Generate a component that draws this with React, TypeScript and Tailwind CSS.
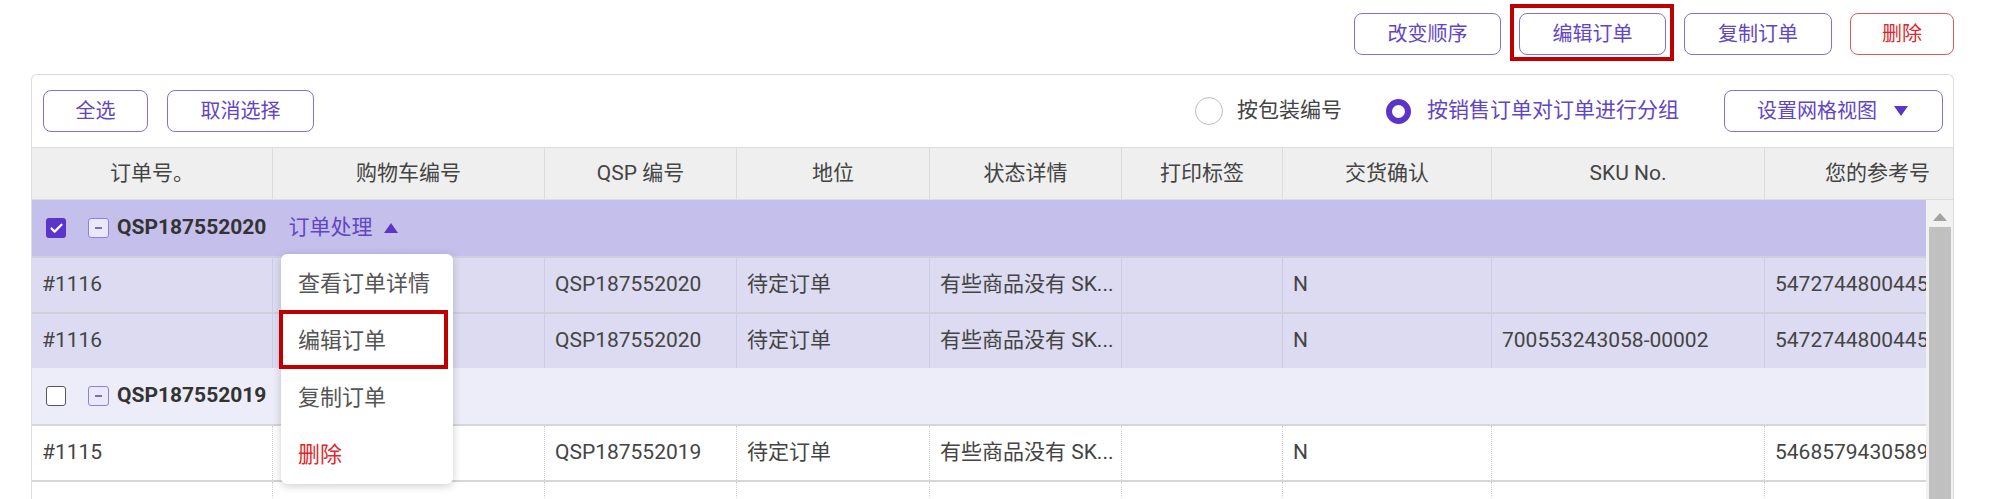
import React from 'react';
import { Check } from 'lucide-react';

const columns = [
  { label: '订单号。', w: 'w-[241px]' },
  { label: '购物车编号', w: 'w-[272px]' },
  { label: 'QSP 编号', w: 'w-[192px]' },
  { label: '地位', w: 'w-[193px]' },
  { label: '状态详情', w: 'w-[192px]' },
  { label: '打印标签', w: 'w-[161px]' },
  { label: '交货确认', w: 'w-[209px]' },
  { label: 'SKU No.', w: 'w-[273px]' },
  { label: '您的参考号', w: 'w-[226px]' },
];

const status = '有些商品没有 SK...';

const groups = [
  {
    id: 'QSP187552020',
    checked: true,
    rowBg: 'bg-[#c5bfec]',
    itemBg: 'bg-[#dcdbf2]',
    items: [
      ['#1116', '', 'QSP187552020', '待定订单', status, '', 'N', '', '5472744800445'],
      ['#1116', '', 'QSP187552020', '待定订单', status, '', 'N', '700553243058-00002', '5472744800445'],
    ],
  },
  {
    id: 'QSP187552019',
    checked: false,
    rowBg: 'bg-[#ecedf8]',
    itemBg: 'bg-white',
    items: [
      ['#1115', '', 'QSP187552019', '待定订单', status, '', 'N', '', '5468579430589'],
      ['', '', '', '', '', '', '', '', ''],
    ],
  },
];

const OutlineButton = ({ label, w, danger }: { label: string; w: string; danger?: boolean }) => (
  <button
    className={`${w} h-[42px] rounded-[8px] border-[1.5px] bg-white text-[20px] ${
      danger ? 'border-[#e05a5a] text-[#e0262c]' : 'border-[#8a6ed8] text-[#6245c6]'
    }`}
  >
    {label}
  </button>
);

const MinusBox = () => (
  <span className="flex h-[20px] w-[21px] items-center justify-center rounded-[3px] border-[1.5px] border-[#8f7fe0] bg-[#ebe8fb]">
    <span className="h-[2px] w-[7px] bg-[#7b6bd0]" />
  </span>
);

export default function App() {
  return (
    <div className="relative h-[499px] w-[2000px] overflow-hidden bg-white font-[Roboto,'Noto_Sans_CJK_SC',sans-serif] text-[21px] text-[#444]">
      {/* top actions */}
      <div className="flex justify-end gap-[18px] pr-[46px] pt-[13px]">
        <OutlineButton label="改变顺序" w="w-[147px]" />
        <div className="relative">
          <OutlineButton label="编辑订单" w="w-[147px]" />
          <span className="absolute -bottom-[6px] -left-[9px] -right-[8px] -top-[9px] border-4 border-[#c00000]" />
        </div>
        <OutlineButton label="复制订单" w="w-[148px]" />
        <OutlineButton label="删除" w="w-[104px]" danger />
      </div>

      {/* grid panel */}
      <div className="ml-[31px] mr-[46px] mt-[19px] rounded-t-[6px] border border-b-0 border-[#dcdcdc]">
        <div className="flex h-[72px] items-center pl-[11px] pr-[10px]">
          <div className="flex gap-[19px]">
            <OutlineButton label="全选" w="w-[105px]" />
            <OutlineButton label="取消选择" w="w-[147px]" />
          </div>
          <div className="ml-auto flex items-center">
            <span className="h-[28px] w-[28px] rounded-full border-[1.5px] border-[#bdbdbd] bg-white" />
            <span className="ml-[14px] text-[#444]">按包装编号</span>
            <span className="ml-[44px] h-[25px] w-[25px] rounded-full border-[6px] border-[#5b34c9] bg-white" />
            <span className="ml-[16px] text-[#6245c6]">按销售订单对订单进行分组</span>
            <button className="ml-[45px] flex h-[42px] w-[219px] items-center rounded-[8px] border-[1.5px] border-[#8a6ed8] bg-white pl-[32px] text-[20px] text-[#6245c6]">
              设置网格视图
              <svg className="ml-[17px]" width="14" height="10" viewBox="0 0 14 10">
                <path d="M0 0 L14 0 L7 10 Z" fill="#5b34c9" />
              </svg>
            </button>
          </div>
        </div>

        {/* header */}
        <div className="flex h-[53px] overflow-hidden border-y border-[#dcdcdc] bg-[#efefef]">
          {columns.map((c) => (
            <div
              key={c.label}
              className={`${c.w} flex shrink-0 items-center justify-center border-r border-[#dcdcdc] text-[#444]`}
            >
              {c.label}
            </div>
          ))}
        </div>

        {/* body */}
        <div className="flex">
          <div className="min-w-0 flex-1 overflow-hidden">
            {groups.map((g) => (
              <div key={g.id}>
                <div className={`flex h-[56px] items-center ${g.rowBg} pl-[14px]`}>
                  {g.checked ? (
                    <span className="flex h-[20px] w-[20px] items-center justify-center rounded-[3px] bg-[#5b34c9]">
                      <Check size={15} strokeWidth={3.5} color="white" />
                    </span>
                  ) : (
                    <span className="h-[20px] w-[20px] rounded-[3px] border-[1.5px] border-[#555] bg-white" />
                  )}
                  <span className="ml-[22px]">
                    <MinusBox />
                  </span>
                  <span className="ml-[8px] font-bold text-[#333]">{g.id}</span>
                  {g.checked && (
                    <span className="ml-[22px] flex items-center text-[#6245c6]">
                      订单处理
                      <svg className="ml-[12px]" width="14" height="10" viewBox="0 0 14 10">
                        <path d="M7 0 L14 10 L0 10 Z" fill="#5b34c9" />
                      </svg>
                    </span>
                  )}
                </div>
                {g.items.map((row, i) => (
                  <div
                    key={i}
                    className={`flex h-[56px] border-t-2 ${
                      g.checked ? 'border-[#cfcfdb]' : 'border-[#d6d6d6]'
                    } ${g.itemBg} ${i === 0 && g.checked ? 'border-t-0' : ''}`}
                  >
                    {row.map((cell, j) => (
                      <div
                        key={j}
                        className={`${columns[j].w} flex shrink-0 items-center overflow-hidden whitespace-nowrap pl-[10px] text-[#444] ${
                          g.checked ? 'border-r border-[#cdcbe6]' : 'border-r border-dotted border-[#cfcfcf]'
                        }`}
                      >
                        {cell}
                      </div>
                    ))}
                  </div>
                ))}
              </div>
            ))}
          </div>

          {/* scrollbar */}
          <div className="flex w-[27px] shrink-0 flex-col items-center bg-[#f1f1f1]">
            <svg className="mt-[13px]" width="14" height="8" viewBox="0 0 14 8">
              <path d="M7 0 L14 8 L0 8 Z" fill="#a3a3a3" />
            </svg>
            <div className="mt-[6px] h-[300px] w-[22px] bg-[#c0c0c0]" />
          </div>
        </div>
      </div>

      {/* dropdown menu */}
      <div className="absolute left-[281px] top-[254px] w-[172px] rounded-[6px] bg-white py-[1px] shadow-[0_2px_8px_rgba(0,0,0,0.2)]">
        <div className="flex h-[57px] items-center pl-[17px] text-[22px] text-[#555]">查看订单详情</div>
        <div className="relative flex h-[57px] items-center pl-[17px] text-[22px] text-[#555]">
          编辑订单
          <span className="absolute -left-[2px] -top-[2px] bottom-0 right-[5px] border-4 border-[#c00000]" />
        </div>
        <div className="flex h-[57px] items-center pl-[17px] text-[22px] text-[#555]">复制订单</div>
        <div className="flex h-[57px] items-center pl-[17px] text-[22px] text-[#e0262c]">删除</div>
      </div>
    </div>
  );
}
